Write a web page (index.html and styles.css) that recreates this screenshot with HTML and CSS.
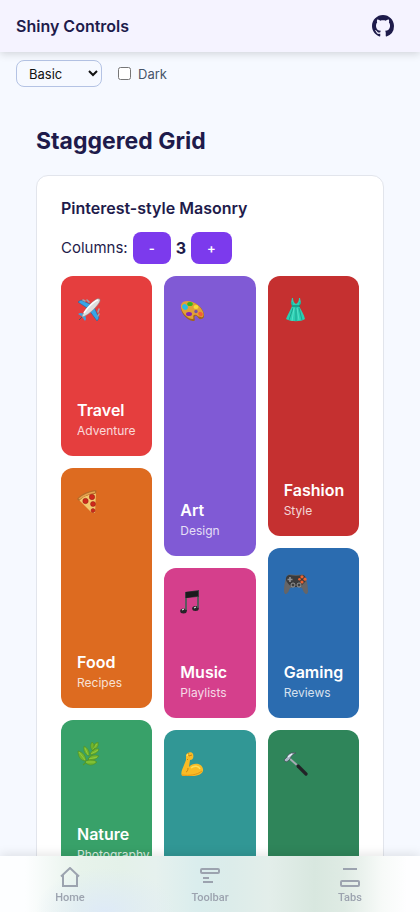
FILE: index.html
```html
<!DOCTYPE html>
<html lang="en">
<head>
<meta charset="utf-8">
<meta name="viewport" content="width=device-width, initial-scale=1">
<title>Shiny Controls</title>
<link rel="stylesheet" href="styles.css">
</head>
<body>
<header class="appbar">
  <span class="brand">Shiny Controls</span>
  <a class="repo" href="#" aria-label="GitHub">
    <svg width="22" height="22" viewBox="0 0 16 16" fill="currentColor" aria-hidden="true"><path d="M8 0C3.58 0 0 3.58 0 8c0 3.54 2.29 6.53 5.47 7.59.4.07.55-.17.55-.38 0-.19-.01-.82-.01-1.49-2.01.37-2.53-.49-2.69-.94-.09-.23-.48-.94-.82-1.13-.28-.15-.68-.52-.01-.53.63-.01 1.08.58 1.23.82.72 1.21 1.87.87 2.33.66.07-.52.28-.87.51-1.07-1.78-.2-3.64-.89-3.64-3.95 0-.87.31-1.59.82-2.15-.08-.2-.36-1.02.08-2.12 0 0 .67-.21 2.2.82.64-.18 1.32-.27 2-.27s1.36.09 2 .27c1.53-1.04 2.2-.82 2.2-.82.44 1.1.16 1.92.08 2.12.51.56.82 1.27.82 2.15 0 3.07-1.87 3.75-3.65 3.95.29.25.54.73.54 1.48 0 1.07-.01 1.93-.01 2.2 0 .21.15.46.55.38A8.01 8.01 0 0 0 16 8c0-4.42-3.58-8-8-8z"/></svg>
  </a>
</header>

<div class="settings">
  <select class="theme" aria-label="Theme"><option>Basic</option></select>
  <label class="dark"><input type="checkbox"> Dark</label>
</div>

<main class="page">
  <h1>Staggered Grid</h1>
  <section class="card">
    <h2>Pinterest-style Masonry</h2>
    <div class="stepper">
      <span>Columns:</span>
      <button type="button" class="step" aria-label="Fewer columns">-</button>
      <strong>3</strong>
      <button type="button" class="step" aria-label="More columns">+</button>
    </div>
    <div class="masonry">
      <div class="column">
        <article class="tile travel">
          <svg class="emoji" viewBox="0 0 24 24" aria-hidden="true">
            <path d="M1 4l3-2 13 6-4 4z" fill="#38a5e8" stroke="#23679b" stroke-width=".6"/>
            <path d="M16 7l6 13-2 3-8-11z" fill="#38a5e8" stroke="#23679b" stroke-width=".6"/>
            <path d="M1 16l2-1 6 1-3 3zM8 15l1 6-1 2-4-6z" fill="#38a5e8"/>
            <path d="M5 19C5 15 15 3 20 1c3-1 4 1 2 4C19 10 9 19 5 19z" fill="#dedede" stroke="#888" stroke-width=".6"/>
            <path d="M7 15C10 10 17 3 21 2" stroke="#fff" stroke-width="1.5" fill="none"/>
            <path d="M2 22l3-3" stroke="#52565b" stroke-width="1"/>
            <path d="M6 2l2 1M10 2l2 2M22 11l-1 3M22 16l-1 2" stroke="#9da5ac" stroke-width="1.6" stroke-linecap="round"/>
          </svg>
          <div><h3>Travel</h3><p>Adventure</p></div>
        </article>
        <article class="tile food">
          <svg class="emoji" viewBox="0 0 24 24" aria-hidden="true">
            <path d="M1 9L19 2l-1 21-4-1z" fill="#f3c86d"/>
            <path d="M0 9C4 4 11 1 18 0c2 0 2 3 0 4C12 4 7 6 2 11z" fill="#b66b29"/>
            <path d="M2 9c5-4 10-6 16-7" stroke="#e5a450" stroke-width="1.4" fill="none"/>
            <g fill="#ce281b" stroke="#912114" stroke-width=".5"><circle cx="15" cy="7" r="2.7"/><circle cx="8.5" cy="11" r="2.7"/><circle cx="16" cy="14" r="2.5"/><circle cx="16" cy="20.5" r="2"/></g>
          </svg>
          <div><h3>Food</h3><p>Recipes</p></div>
        </article>
        <article class="tile nature">
          <svg class="emoji" viewBox="0 0 24 24" aria-hidden="true">
            <path d="M6 23C12 18 17 10 18 2" stroke="#549b27" stroke-width="1.2" fill="none"/>
            <path d="M9 19C4 19 1 15 1 9c5 1 8 5 8 10zM12 14C8 12 6 9 7 4c4 2 6 6 5 10zM16 9c-3-3-3-6-1-9 3 2 3 6 1 9zM16 7c0-4 2-6 5-7 1 4-1 7-5 7zM13 12c2-4 5-6 9-5-1 4-5 6-9 5zM11 17c3-4 7-5 11-3-3 4-7 5-11 3zM8 20c4-3 8-3 12 0-4 4-9 4-12 0z" fill="#71b52d" stroke="#4c8c20" stroke-width=".5"/>
            <path d="M2 10l6 8M8 6l3 7M20 2l-4 5M21 8l-7 4M20 15l-8 2M18 20H9" stroke="#a5d849" stroke-width=".6"/>
          </svg>
          <div><h3>Nature</h3><p>Photography</p></div>
        </article>
        <article class="tile sky"></article>
      </div>
      <div class="column">
        <article class="tile art">
          <svg class="emoji" viewBox="0 0 24 24" aria-hidden="true">
            <path d="M3 5C9 2 19 5 23 13c2 5 1 8-2 8-3 1-3-4-6-3-2 1 2 5-2 5C5 22-3 10 3 5z" fill="#a36619"/>
            <path d="M3 4C9 1 18 5 22 12c3 5 1 8-1 7-4 0-4-3-7-2-2 1 1 4-2 4C5 20-3 9 3 4z" fill="#e0a138"/>
            <ellipse cx="5" cy="9" rx="3" ry="2.5" transform="rotate(40 5 9)" fill="#27bde7"/><ellipse cx="10" cy="6" rx="2.8" ry="2" fill="#36b51d"/><ellipse cx="16" cy="9" rx="2.5" ry="2" fill="#f6dc38"/><ellipse cx="9" cy="16" rx="3" ry="2" fill="#8525b4"/><ellipse cx="20.5" cy="16" rx="2.5" ry="2" transform="rotate(35 20.5 16)" fill="#f35b3c"/><circle cx="16" cy="13.5" r="1.7" fill="#7350ad"/>
          </svg>
          <div><h3>Art</h3><p>Design</p></div>
        </article>
        <article class="tile music">
          <svg class="emoji" viewBox="0 0 24 24" aria-hidden="true">
            <path d="M5 2l14-2v18h-2V7L7 8v13H5z" fill="#3e3940"/><path d="M6 2l12-1v5L6 8z" fill="#1c1a1d"/>
            <ellipse cx="3.5" cy="21" rx="3.3" ry="2.5" fill="#252328"/><ellipse cx="15.5" cy="18.5" rx="3.3" ry="2.5" fill="#252328"/>
            <path d="M2 20l2-1M14 18l2-1" stroke="#ddd" stroke-width="1.2"/><path d="M6 8v12M18 7v11" stroke="#858087" stroke-width=".9"/>
          </svg>
          <div><h3>Music</h3><p>Playlists</p></div>
        </article>
        <article class="tile fitness">
          <svg class="emoji" viewBox="0 0 24 24" aria-hidden="true">
            <path d="M6 3c1-3 6-4 7-1 1 3 0 6-3 6l-1 7c4-5 13-4 14 2 1 5-6 7-11 7H3C1 24 1 21 2 18L6 8z" fill="#f9bb25"/>
            <path d="M8 16c0 2-1 4-2 4M8 8L7 7M8 1l1 3 3-1" stroke="#bd770b" stroke-width=".8" fill="none"/><path d="M11 16c3-3 8-2 9 1M7 4l1-2" stroke="#ffdf58" stroke-width="1.5" fill="none"/><path d="M2 23c7 1 15 0 20-4" stroke="#e39617" stroke-width="1" fill="none"/>
          </svg>
        </article>
      </div>
      <div class="column">
        <article class="tile fashion">
          <svg class="emoji" viewBox="0 0 24 24" aria-hidden="true">
            <path d="M8 0h1c0 3 1 5 3 6 2-1 3-3 3-6h1l1 5-2 3c2 4 5 8 6 13-4 3-14 3-19 0 2-5 4-8 6-13L7 5z" fill="#2cceb2"/>
            <path d="M8 8h8" stroke="#147f75" stroke-width="1.2"/><path d="M9 10L5 22M12 9v14M15 10l3 12M8 4v3M16 4v3" stroke="#169985" stroke-width=".8"/><path d="M10 10L8 23M13 10l2 12" stroke="#66ead1" stroke-width=".7"/>
          </svg>
          <div><h3>Fashion</h3><p>Style</p></div>
        </article>
        <article class="tile gaming">
          <svg class="emoji" viewBox="0 -2 24 24" aria-hidden="true">
            <path d="M4 3c3-1 5 0 8 0s6-1 8 0c3 3 4 12 4 17-1 4-4 2-6-4-3-1-9-1-12 0-2 6-5 8-6 4C0 14 1 6 4 3z" fill="#656567"/>
            <path d="M5 3c5 1 9 1 14 0 3 1 4 5 2 7-3 3-4 5-9 5s-7-2-9-5C1 7 2 4 5 3z" fill="#3a3a3b"/>
            <path d="M6 5v5M3.5 7.5h5" stroke="#8e8e90" stroke-width="1.7"/><g fill="#ef6330"><circle cx="18" cy="4.8" r="1.6"/><circle cx="21" cy="7.2" r="1.6"/><circle cx="18" cy="10" r="1.6"/><circle cx="15.5" cy="7.2" r="1.3"/></g><g fill="#3d3d3d" stroke="#aaa" stroke-width=".8"><circle cx="9" cy="13" r="2"/><circle cx="15" cy="13" r="2"/></g>
          </svg>
          <div><h3>Gaming</h3><p>Reviews</p></div>
        </article>
        <article class="tile diy">
          <svg class="emoji" viewBox="0 0 24 24" aria-hidden="true">
            <path d="M5 6l9 8" stroke="#a5abb2" stroke-width="2"/><path d="M14 14l8 8" stroke="#222327" stroke-width="3.2" stroke-linecap="round"/>
            <path d="M0 8l3-3c1-3 4-5 9-4-3 1-4 2-5 4L6 7 4 9l-2 1z" fill="#abb9c8" stroke="#434c55" stroke-width=".7"/><path d="M4 5l4-3" stroke="#eff7ff" stroke-width="1.2"/>
          </svg>
        </article>
      </div>
    </div>
  </section>
</main>

<nav class="tabbar">
  <a href="#"><svg viewBox="0 0 20 20" aria-hidden="true"><path d="M1 9.500L10 1l9 8.500M3 8v11h14V8"/></svg>Home</a>
  <a href="#"><svg viewBox="0 0 20 20" aria-hidden="true"><rect x="1" y="2" width="18" height="4" rx="1"/><path d="M3 11h6M3 15h10"/></svg>Toolbar</a>
  <a href="#"><svg viewBox="0 0 20 20" aria-hidden="true"><path d="M3 2h14"/><rect x="1" y="14" width="18" height="5" rx="1"/></svg>Tabs</a>
</nav>
</body>
</html>
```
FILE: styles.css
```css
* { box-sizing: border-box; }
html { scrollbar-width: none; }
body {
  margin: 0;
  padding-bottom: 56px;
  background: #f6f9ff;
  color: #1e1b4b;
  font-family: Inter, "Liberation Sans", sans-serif;
  font-size: 16px;
  line-height: 24px;
}
h1, h2, h3, p { margin: 0; }

.appbar {
  position: sticky;
  top: 0;
  z-index: 2;
  display: flex;
  align-items: center;
  justify-content: space-between;
  height: 52px;
  padding: 0 26px 0 16px;
  background: #f5f3ff;
  box-shadow: 0 2px 8px rgba(0, 0, 0, .15);
}
.brand { font-size: 16px; font-weight: 600; }
.repo { display: flex; color: #1e1b4b; }

.settings {
  display: flex;
  align-items: center;
  gap: 16px;
  padding: 8px 16px;
}
.theme {
  width: 86px;
  height: 27px;
  padding: 0 0 0 8px;
  border: 1px solid #b4c3e4;
  border-radius: 8px;
  background: #f6f9ff;
  color: #111;
  font: 13px Inter, sans-serif;
}
.dark {
  display: flex;
  align-items: center;
  gap: 7px;
  color: #475569;
  font-size: 13px;
}
.dark input { width: 13px; height: 13px; margin: 0; }

.page { padding: 30px 36px; }
h1 {
  margin-bottom: 18px;
  font-size: 23px;
  line-height: 32px;
  font-weight: 700;
}
.card {
  padding: 20px 24px 24px;
  border: 1px solid #e2e5ec;
  border-radius: 12px;
  background: #fff;
}
h2 { margin-bottom: 12px; font-size: 16px; font-weight: 600; }
.stepper {
  display: flex;
  align-items: center;
  gap: 5px;
  margin-bottom: 12px;
}
.stepper span { font-size: 15px; }
.step {
  height: 32px;
  padding: 0 16px;
  border: 0;
  border-radius: 8px;
  background: #7c3aed;
  color: #fff;
  font: 600 13px Inter, sans-serif;
}

.masonry {
  display: grid;
  grid-template-columns: repeat(3, minmax(0, 1fr));
  align-items: start;
  gap: 12px;
}
.column {
  display: grid;
  grid-template-columns: minmax(0, 1fr);
  gap: 12px;
}
.tile {
  display: flex;
  flex-direction: column;
  justify-content: space-between;
  padding: 22px 16px 16px;
  border-radius: 12px;
  color: #fff;
}
.emoji { width: 24px; height: 24px; }
h3 { font-size: 16px; line-height: 24px; font-weight: 600; }
.tile p { font-size: 12px; line-height: 18px; opacity: .8; }
.travel { height: 180px; background: #e53e3e; }
.food { height: 240px; background: #dd6b20; }
.nature { height: 160px; background: #38a169; }
.sky { height: 200px; background: #3182ce; }
.art { height: 280px; background: #805ad5; }
.music { height: 150px; background: #d53f8c; }
.fitness { height: 220px; background: #319795; }
.fashion { height: 260px; background: #c53030; }
.gaming { height: 170px; background: #2b6cb0; }
.diy { height: 240px; background: #2f855a; }

.tabbar {
  position: fixed;
  inset: auto 0 0;
  z-index: 2;
  display: grid;
  grid-template-columns: repeat(3, 1fr);
  height: 56px;
  padding-top: 4px;
  background:
    radial-gradient(ellipse 70px 44px at 25% 100%, #deeaf7, rgba(222, 234, 247, 0)),
    linear-gradient(90deg, #fdfeff 6%, #e7f3eb 19%, #e4f1e9 29%, #e6f1ee 37%, #daeded 47%, #dcecea 55%, #e3eeea 64%, #d8e7df 75%, #dfebe4 82%, #f7faf8 91%, #fefeff 97%);
  box-shadow: 0 -2px 10px rgba(0, 0, 0, .1);
}
.tabbar a {
  display: flex;
  flex-direction: column;
  align-items: center;
  justify-content: center;
  gap: 4px;
  color: #9ca3af;
  font: 500 11px/14px Roboto, sans-serif;
  text-decoration: none;
}
.tabbar svg {
  width: 20px;
  height: 20px;
  fill: none;
  stroke: currentColor;
  stroke-width: 2;
}
```
